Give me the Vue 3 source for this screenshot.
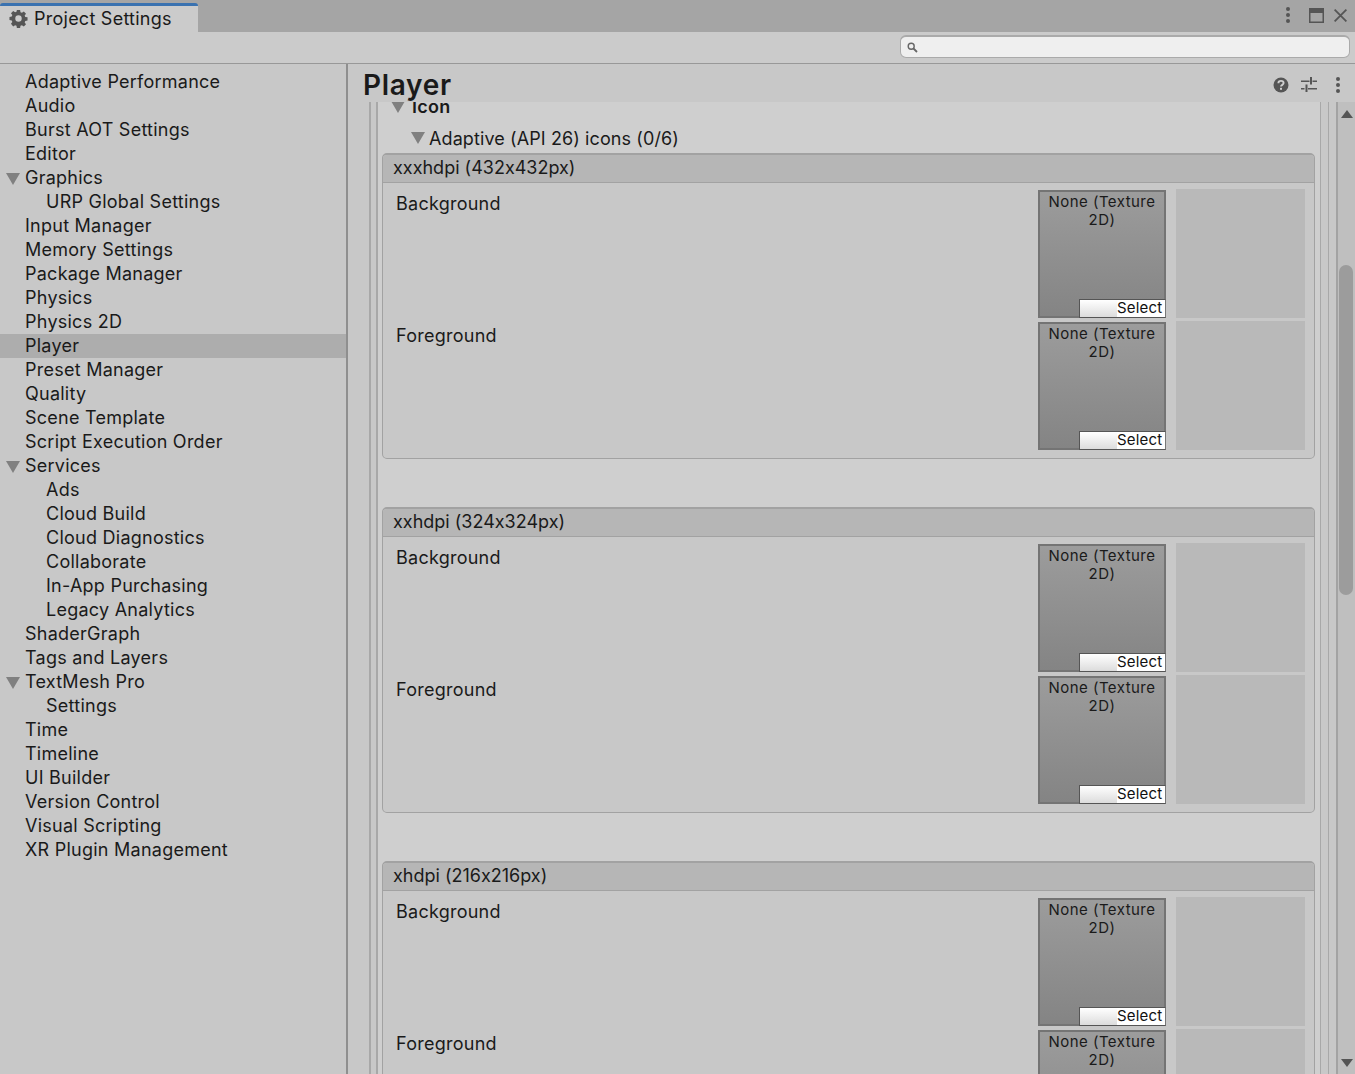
<script setup>
const menu = [
  { label: 'Adaptive Performance' }, { label: 'Audio' }, { label: 'Burst AOT Settings' }, { label: 'Editor' },
  { label: 'Graphics', open: true }, { label: 'URP Global Settings', sub: true },
  { label: 'Input Manager' }, { label: 'Memory Settings' }, { label: 'Package Manager' },
  { label: 'Physics' }, { label: 'Physics 2D' }, { label: 'Player', active: true },
  { label: 'Preset Manager' }, { label: 'Quality' }, { label: 'Scene Template' }, { label: 'Script Execution Order' },
  { label: 'Services', open: true }, { label: 'Ads', sub: true }, { label: 'Cloud Build', sub: true },
  { label: 'Cloud Diagnostics', sub: true }, { label: 'Collaborate', sub: true }, { label: 'In-App Purchasing', sub: true },
  { label: 'Legacy Analytics', sub: true }, { label: 'ShaderGraph' }, { label: 'Tags and Layers' },
  { label: 'TextMesh Pro', open: true }, { label: 'Settings', sub: true }, { label: 'Time' }, { label: 'Timeline' },
  { label: 'UI Builder' }, { label: 'Version Control' }, { label: 'Visual Scripting' }, { label: 'XR Plugin Management' },
];
const groups = ['xxxhdpi (432x432px)', 'xxhdpi (324x324px)', 'xhdpi (216x216px)'];
const slots = ['Background', 'Foreground'];
</script>

<template>
  <div class="win">
    <div class="titlebar">
      <div class="tab">
        <svg class="gear" width="19" height="19" viewBox="0 0 20 20">
          <path fill="#555" fill-rule="evenodd" d="M8.300 1h3.400l.4 2.400 1.500.6 2-1.400 2.300 2.300-1.400 2 .6 1.500 2.400.4v3.400l-2.400.4-.6 1.500 1.400 2-2.300 2.300-2-1.400-1.500.6-.4 2.400H8.300l-.4-2.400-1.500-.6-2 1.400L2.100 15.600l1.400-2-.6-1.500-2.400-.4V8.300l2.400-.4.6-1.500-1.400-2L4.400 2.100l2 1.400 1.500-.6zM10 6.600a3.400 3.400 0 1 0 0 6.800 3.400 3.400 0 0 0 0-6.800z" />
        </svg>
        <span>Project Settings</span>
      </div>
      <div class="win-btns">
        <svg class="dots" width="6" height="16" viewBox="0 0 6 16"><circle cx="3" cy="2" r="2" fill="#555" /><circle cx="3" cy="8" r="2" fill="#555" /><circle cx="3" cy="14" r="2" fill="#555" /></svg>
        <svg width="15" height="15" viewBox="0 0 15 15"><path fill="#555" fill-rule="evenodd" d="M0 0h15v15H0zM1.500 5v8.500h12V5z" /></svg>
        <svg width="13" height="13" viewBox="0 0 13 13"><path stroke="#555" stroke-width="1.800" d="M.6.600l11.800 11.800M12.400.600L.6 12.400" /></svg>
      </div>
    </div>
    <div class="searchbar">
      <div class="search">
        <svg width="11" height="11" viewBox="0 0 11 11"><circle cx="4.200" cy="4.200" r="3" fill="none" stroke="#666" stroke-width="1.400" /><path d="M6.500 6.500L10 10" stroke="#666" stroke-width="1.800" /></svg>
      </div>
    </div>
    <div class="body">
      <nav class="side">
        <div v-for="m in menu" :key="m.label" class="item" :class="{ active: m.active, sub: m.sub }">
          <i v-if="m.open" class="tri side-tri"></i>{{ m.label }}
        </div>
      </nav>
      <main class="main">
        <header class="head">
          <h1>Player</h1>
          <div class="head-icons">
            <svg width="16" height="16" viewBox="0 0 16 16">
              <circle cx="8" cy="8" r="7.500" fill="#555" />
              <path d="M5.400 6.200c0-1.500 1.200-2.300 2.600-2.300s2.600.8 2.600 2.200c0 1.800-2.600 1.700-2.600 3.500" fill="none" stroke="#d0d0d0" stroke-width="1.900" />
              <rect x="7" y="10.800" width="2" height="2" fill="#d0d0d0" />
            </svg>
            <svg width="16" height="16" viewBox="0 0 16 16">
              <path fill="#555" d="M0 3.500h8.500v1.600H0zM11.500 3.500H16v1.600h-4.500zM9 0h2v7.500H9zM0 11h3.500v1.600H0zM7 11h9v1.600H7zM4.500 7.500h2V15h-2z" />
            </svg>
            <svg class="dots" width="6" height="16" viewBox="0 0 6 16"><circle cx="3" cy="2" r="2" fill="#555" /><circle cx="3" cy="8" r="2" fill="#555" /><circle cx="3" cy="14" r="2" fill="#555" /></svg>
          </div>
        </header>
        <div class="scroller">
          <div class="outer-rail">
            <div class="inner-rail">
              <div class="inner">
                <div class="foldout bold"><i class="tri"></i>Icon</div>
                <div class="foldout sub"><i class="tri"></i>Adaptive (API 26) icons (0/6)</div>
                <section v-for="g in groups" :key="g" class="group">
                  <div class="group-head">{{ g }}</div>
                  <div class="group-body">
                    <div v-for="s in slots" :key="s" class="slot">
                      <span class="slot-label">{{ s }}</span>
                      <div class="field">
                        <div class="field-text">None (Texture 2D)</div>
                        <div class="select"><span class="select-blank"></span><span class="select-text">Select</span></div>
                      </div>
                      <div class="preview"></div>
                    </div>
                  </div>
                </section>
              </div>
            </div>
          </div>
          <div class="scrollbar">
            <i class="arrow up"></i>
            <div class="thumb"></div>
            <i class="arrow down"></i>
          </div>
        </div>
      </main>
    </div>
  </div>
</template>

<style>
html, body { margin: 0; overflow: hidden; }
</style>

<style scoped>
.win {
  width: 1355px;
  height: 1074px;
  display: flex;
  flex-direction: column;
  overflow: hidden;
  background: #c8c8c8;
  color: #1a1a1a;
  font-family: Inter, "Liberation Sans", sans-serif;
  font-size: 18px;
  letter-spacing: 0.25px;
  font-feature-settings: "calt" 0;
}
.titlebar {
  height: 32px;
  flex: none;
  display: flex;
  justify-content: space-between;
  background: #a5a5a5;
}
.tab {
  box-sizing: border-box;
  width: 198px;
  height: 29px;
  margin-top: 3px;
  padding: 0 0 1px 9px;
  display: flex;
  align-items: center;
  gap: 6px;
  background: #cbcbcb;
  border-top: 3px solid #3a72b0;
  border-radius: 3px 3px 0 0;
}
.win-btns { display: flex; align-items: center; gap: 10px; padding: 0 8px 2px 0; }
.win-btns .dots { margin-right: 8px; }
.searchbar {
  box-sizing: border-box;
  height: 32px;
  flex: none;
  display: flex;
  justify-content: flex-end;
  align-items: flex-start;
  padding: 3px 5px 0 0;
  background: #cbcbcb;
  border-bottom: 1px solid #989898;
}
.search {
  box-sizing: border-box;
  width: 450px;
  height: 23px;
  padding-left: 6px;
  display: flex;
  align-items: center;
  background: #efefef;
  border: 1px solid #aaa;
  border-top-width: 2px;
  border-radius: 6px;
}
.body { flex: 1; display: flex; min-height: 0; }
.side {
  width: 346px;
  flex: none;
  padding-top: 6px;
  background: #c8c8c8;
  border-right: 2px solid #8f8f8f;
}
.item {
  position: relative;
  height: 24px;
  line-height: 23px;
  padding-left: 25px;
  white-space: nowrap;
}
.item.sub { padding-left: 46px; }
.item.active { background: #adadad; }
.tri {
  position: absolute;
  width: 0;
  height: 0;
  border-left: 7px solid transparent;
  border-right: 7px solid transparent;
  border-top: 12px solid #808080;
}
.side-tri { left: 6px; top: 7px; }
.main { flex: 1; min-width: 0; display: flex; flex-direction: column; background: #c8c8c8; }
.head {
  height: 38px;
  flex: none;
  display: flex;
  justify-content: space-between;
  align-items: center;
  padding: 0 14px 0 15px;
}
.head h1 {
  margin: 4px 0 0;
  font-size: 28px;
  font-weight: 600;
  letter-spacing: 0.7px;
  line-height: 34px;
}
.head-icons { display: flex; align-items: center; gap: 12px; padding-top: 4px; }
.head-icons .dots { margin-left: 6px; }
.scroller { flex: 1; min-height: 0; display: flex; overflow: hidden; }
.outer-rail {
  flex: 1;
  min-width: 0;
  margin-left: 21px;
  padding: 0 7px 0 5px;
  border-left: 2px solid #a8a8a8;
  border-right: 1px solid #a8a8a8;
  background: #c8c8c8;
}
.inner-rail {
  box-sizing: border-box;
  height: 100%;
  padding: 0 5px 0 4px;
  border-left: 2px solid #a8a8a8;
  border-right: 1px solid #a8a8a8;
  background: #cfcfcf;
  overflow: hidden;
}
.inner { margin-top: -7px; }
.foldout { position: relative; }
.foldout.bold { font-weight: 600; height: 30px; line-height: 24px; padding-left: 30px; }
.foldout.bold .tri { left: 9px; top: 6px; }
.foldout.sub { height: 28px; line-height: 28px; padding-left: 47px; letter-spacing: 0.1px; }
.foldout.sub .tri { left: 29px; top: 7px; }
.group {
  box-sizing: border-box;
  height: 306px;
  margin-bottom: 48px;
  border: 1px solid #a2a2a2;
  border-top: 2px solid #a2a2a2;
  border-radius: 5px;
  background: #c8c8c8;
  overflow: hidden;
}
.group-head {
  box-sizing: border-box;
  height: 28px;
  line-height: 26px;
  padding-left: 10px;
  letter-spacing: 0;
  background: #b6b6b6;
  border-bottom: 1px solid #a2a2a2;
}
.group-body { padding-top: 6px; }
.slot { display: flex; height: 132px; align-items: flex-start; padding-left: 13px; }
.slot-label { flex: 1; line-height: 30px; }
.field {
  position: relative;
  box-sizing: border-box;
  width: 128px;
  height: 128px;
  margin-top: 1px;
  padding: 1px 6px 0;
  text-align: center;
  font-size: 15px;
  line-height: 18px;
  letter-spacing: 0.45px;
  background: linear-gradient(#9c9c9c, #848484);
  border: 2px solid #747474;
}
.select {
  position: absolute;
  right: -2px;
  bottom: -2px;
  width: 87px;
  height: 19px;
  display: flex;
  background: #fff;
  border: 1px solid #555;
  border-right-color: #777;
  box-sizing: border-box;
  color: #111;
  font-size: 15px;
  line-height: 16px;
  letter-spacing: 0.2px;
}
.select-blank { width: 37px; background: linear-gradient(#fff, #dcdcdc); }
.preview { flex: none; width: 129px; height: 129px; margin: 0 9px 0 10px; background: #b9b9b9; }
.scrollbar {
  position: relative;
  width: 19px;
  flex: none;
  box-sizing: border-box;
  margin-left: 7px;
  background: #bfbfbf;
  border-left: 2px solid #a3a3a3;
}
.thumb {
  position: absolute;
  left: 1px;
  top: 163px;
  width: 14px;
  height: 330px;
  border-radius: 7px;
  background: #9c9c9c;
}
.arrow { position: absolute; left: 3px; width: 0; height: 0; border-left: 6px solid transparent; border-right: 6px solid transparent; }
.arrow.up { top: 8px; border-bottom: 8px solid #555; }
.arrow.down { bottom: 7px; border-top: 8px solid #555; }
</style>
